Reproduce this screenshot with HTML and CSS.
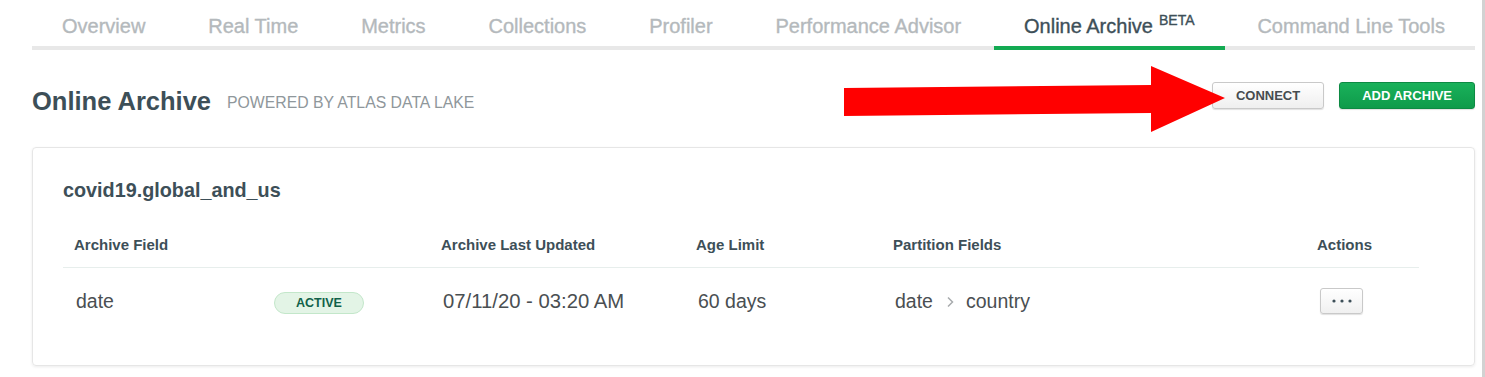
FILE: index.html
```html
<!DOCTYPE html>
<html lang="en">
<head>
    <meta charset="UTF-8">
    <title>Online Archive</title>
    <link rel="stylesheet" href="styles.css">
</head>
<body>
    <div class="page">
        <nav class="tabs">
            <a class="tab">Overview</a>
            <a class="tab">Real Time</a>
            <a class="tab">Metrics</a>
            <a class="tab">Collections</a>
            <a class="tab">Profiler</a>
            <a class="tab">Performance Advisor</a>
            <a class="tab active">Online Archive<span class="beta">BETA</span></a>
            <a class="tab">Command Line Tools</a>
        </nav>

        <div class="page-header">
            <div class="title-group">
                <h1>Online Archive</h1>
                <span class="subtitle">POWERED BY ATLAS DATA LAKE</span>
            </div>
            <div class="button-group">
                <button class="button">CONNECT</button>
                <button class="button primary">ADD ARCHIVE</button>
            </div>
        </div>

        <div class="card">
            <h2>covid19.global_and_us</h2>
            <div class="archive-table">
                <div class="th">Archive Field</div>
                <div class="th"></div>
                <div class="th">Archive Last Updated</div>
                <div class="th">Age Limit</div>
                <div class="th">Partition Fields</div>
                <div class="th">Actions</div>

                <div class="td">date</div>
                <div class="td"><span class="badge">ACTIVE</span></div>
                <div class="td">07/11/20 - 03:20 AM</div>
                <div class="td">60 days</div>
                <div class="td">
                    date
                    <svg class="chevron" width="8" height="12" viewBox="0 0 8 12"><path d="M2 1.5 L6.5 6 L2 10.5" fill="none" stroke="#a8abad" stroke-width="1.5"/></svg>
                    country
                </div>
                <div class="td">
                    <button class="more">
                        <svg width="20" height="4" viewBox="0 0 20 4"><circle cx="2" cy="2" r="1.6" fill="#3d4f58"/><circle cx="10" cy="2" r="1.6" fill="#3d4f58"/><circle cx="18" cy="2" r="1.6" fill="#3d4f58"/></svg>
                    </button>
                </div>
            </div>
        </div>

        <svg class="arrow" width="381" height="66" viewBox="0 0 381 66">
            <polygon points="0,22 307,19 307,0 381,32 307,66 307,47 0,50" fill="#ff0000"/>
        </svg>
    </div>
    <div class="edge"></div>
</body>
</html>
```

FILE: styles.css
```css
body {
    margin: 0;
    display: flex;
    font-family: "Liberation Sans", Arial, sans-serif;
    color: #3d4f58;
    background-color: #fff;
}
.page {
    position: relative;
    flex: 1;
    padding: 0 7px 0 32px;
    height: 377px;
}
.edge {
    width: 3px;
    background-color: #d2d2d2;
}

.tabs {
    display: flex;
    justify-content: space-between;
    border-bottom: 4px solid #e8e8e8;
}
.tab {
    display: block;
    height: 24px;
    padding: 14px 30px 8px;
    margin-bottom: -4px;
    border-bottom: 4px solid transparent;
    font-size: 20px;
    line-height: 24px;
    color: #b4b9bc;
    -webkit-text-stroke: 0.35px #b4b9bc;
    white-space: nowrap;
}
.tab.active {
    color: #3d4f58;
    -webkit-text-stroke: 0.35px #3d4f58;
    border-bottom-color: #13aa52;
}
.beta {
    font-size: 14px;
    line-height: 0;
    margin-left: 6px;
    position: relative;
    top: -8px;
}

.page-header {
    display: flex;
    justify-content: space-between;
    align-items: flex-start;
    margin-top: 32px;
}
.title-group {
    display: flex;
    align-items: baseline;
    gap: 16px;
    margin-top: 4px;
}
h1 {
    margin: 0;
    font-size: 25.5px;
    line-height: 30px;
    font-weight: 700;
    color: #3d4f58;
}
.subtitle {
    font-size: 15.8px;
    color: #8f979b;
    position: relative;
    top: -2px;
}
.button-group {
    display: flex;
    gap: 15px;
}
.button {
    height: 27px;
    padding: 0 23px;
    font-family: inherit;
    font-size: 13px;
    font-weight: 700;
    color: #464c4f;
    background: linear-gradient(#ffffff, #efefef);
    border: 1px solid #c9c9c9;
    border-radius: 3px;
    box-shadow: 0 1px 1px rgba(0, 0, 0, 0.12);
}
.button.primary {
    padding: 0 22px;
    color: #fff;
    background: linear-gradient(#19b15a, #0f9b4b);
    border-color: #0d8a43;
}

.card {
    margin-top: 31px;
    padding: 30px;
    border: 1px solid #e6e6e6;
    border-radius: 4px;
    box-shadow: 0 1px 3px rgba(0, 0, 0, 0.08);
}
h2 {
    margin: 0;
    font-size: 19.8px;
    line-height: 24px;
    font-weight: 700;
    color: #3d4f58;
}
.archive-table {
    display: grid;
    grid-template-columns: 200px 167px 255px 197px 424px 113px;
    margin-top: 21px;
}
.th {
    padding: 13px 11px;
    font-size: 15px;
    line-height: 18px;
    font-weight: 700;
    color: #3d4f58;
    border-bottom: 1px solid #e7eeec;
}
.td {
    display: flex;
    align-items: center;
    height: 67px;
    padding: 0 11px;
    font-size: 19.5px;
    color: #4a4f52;
    box-sizing: border-box;
}
.td:nth-child(7),
.td:nth-child(9),
.td:nth-child(10),
.td:nth-child(11) {
    padding-left: 13px;
}
.td:nth-child(9) {
    font-size: 20.3px;
}
.badge {
    display: inline-block;
    height: 22px;
    line-height: 20px;
    padding: 0 21px;
    box-sizing: border-box;
    font-size: 12.5px;
    font-weight: 700;
    color: #116149;
    background-color: #e3f4e6;
    border: 1px solid #c3e7ca;
    border-radius: 11px;
    margin-top: 3px;
}
.chevron {
    margin: 0 12px 0 13px;
}
.more {
    width: 43px;
    height: 26px;
    padding: 0;
    margin-left: 3px;
    margin-bottom: 1px;
    display: flex;
    align-items: center;
    justify-content: center;
    background: linear-gradient(#ffffff, #f0f0f0);
    border: 1px solid #c9c9c9;
    border-radius: 3px;
    box-shadow: 0 1px 1px rgba(0, 0, 0, 0.12);
}

.arrow {
    position: absolute;
    left: 844px;
    top: 66px;
}
```
